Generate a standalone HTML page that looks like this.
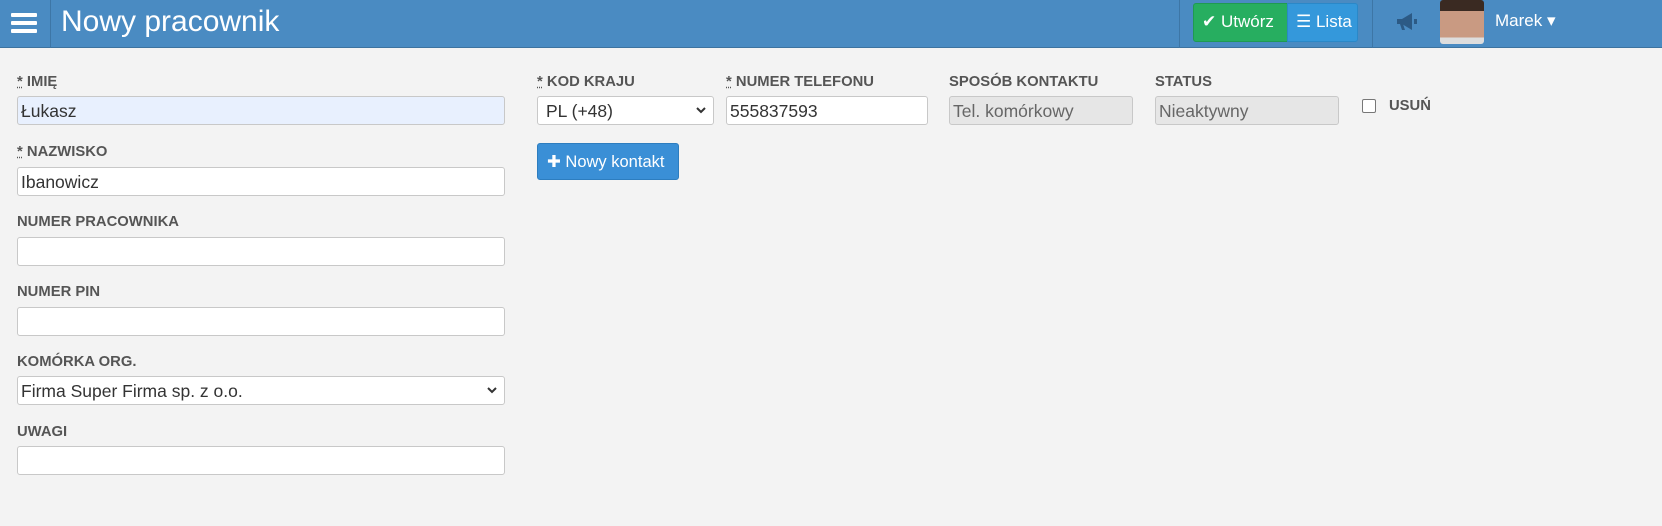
<!DOCTYPE html><html><head><meta charset="utf-8"><style>
*{box-sizing:border-box}body{margin:0;width:1662px;height:526px;background:#f3f3f3;font-family:"Liberation Sans","DejaVu Sans",sans-serif;position:relative;overflow:hidden}
.hd{position:absolute;left:0;top:0;width:1662px;height:48px;background:#4a8bc2;border-bottom:1px solid #3d739f}
.sep{position:absolute;top:0;width:1px;height:48px;background:#3d76a6}
.t{position:absolute;left:61px;top:5px;color:#fff;font-size:30px}
.lab{position:absolute;font-size:14.8px;font-weight:bold;color:#555}
.lab u{text-decoration:underline dotted}
.in{position:absolute;height:29px;border:1px solid #c8c8c8;border-radius:3px;background:#fff;font-size:17.5px;color:#333;padding:4px 0 0 3px}
.dis{background:#e6e6e6;color:#666}
.chev{position:absolute;right:6px;top:7px}
</style></head><body>
<div class="hd">
<div style="position:absolute;left:11px;top:13px;width:26px"><div style="height:4px;background:#fff;margin-bottom:4px;border-radius:1px"></div><div style="height:4px;background:#fff;margin-bottom:4px;border-radius:1px"></div><div style="height:4px;background:#fff;border-radius:1px"></div></div>
<div class="sep" style="left:50px"></div>
<div class="t">Nowy pracownik</div>
<div class="sep" style="left:1179px"></div>
<div style="position:absolute;left:1193px;top:3px;width:95px;height:39px;background:#27ae60;border:1px solid #1f9a52;border-radius:3px 0 0 3px;color:#fff;font-size:17px;padding:8px 0 0 8px">✔ Utwórz</div>
<div style="position:absolute;left:1287px;top:3px;width:71px;height:39px;background:#3498db;border:1px solid #2a88c8;border-radius:0 3px 3px 0;color:#fff;font-size:17px;padding:8px 0 0 8px">☰ Lista</div>
<div class="sep" style="left:1372px"></div>
<svg style="position:absolute;left:1396px;top:12px" width="22" height="20" viewBox="0 0 22 20"><path d="M1 7h5l10-6v17l-10-6H1z" fill="#2c5a85"/><path d="M4 12l2 6h3l-2-6z" fill="#2c5a85"/><rect x="18" y="7" width="3" height="5" fill="#2c5a85"/></svg>
<div style="position:absolute;left:1440px;top:0;width:44px;height:44px;border-radius:3px;background:linear-gradient(#3a2a22 0 25%,#c99a82 25% 85%,#ddd 85%)"></div>
<div style="position:absolute;left:1495px;top:11px;color:#fff;font-size:17px">Marek ▾</div>
</div>
<div class="lab" style="left:17px;top:74px"><u>*</u> IMIĘ</div>
<div class="in" style="left:17px;top:96px;width:488px;background:#e8f0fe">Łukasz</div>
<div class="lab" style="left:17px;top:144px"><u>*</u> NAZWISKO</div>
<div class="in" style="left:17px;top:167px;width:488px">Ibanowicz</div>
<div class="lab" style="left:17px;top:214px">NUMER PRACOWNIKA</div>
<div class="in" style="left:17px;top:237px;width:488px"></div>
<div class="lab" style="left:17px;top:284px">NUMER PIN</div>
<div class="in" style="left:17px;top:307px;width:488px"></div>
<div class="lab" style="left:17px;top:354px">KOMÓRKA ORG.</div>
<div class="in" style="left:17px;top:376px;width:488px">Firma Super Firma sp. z o.o.<svg class="chev" width="12" height="12" viewBox="0 0 12 12"><path d="M2 4l4 4 4-4" fill="none" stroke="#333" stroke-width="2"/></svg></div>
<div class="lab" style="left:17px;top:424px">UWAGI</div>
<div class="in" style="left:17px;top:446px;width:488px"></div>
<div class="lab" style="left:537px;top:74px"><u>*</u> KOD KRAJU</div>
<div class="in" style="left:537px;top:96px;width:177px;padding-left:8px">PL (+48)<svg class="chev" width="12" height="12" viewBox="0 0 12 12"><path d="M2 4l4 4 4-4" fill="none" stroke="#333" stroke-width="2"/></svg></div>
<div class="lab" style="left:726px;top:74px"><u>*</u> NUMER TELEFONU</div>
<div class="in" style="left:726px;top:96px;width:202px">555837593</div>
<div class="lab" style="left:949px;top:74px">SPOSÓB KONTAKTU</div>
<div class="in dis" style="left:949px;top:96px;width:184px">Tel. komórkowy</div>
<div class="lab" style="left:1155px;top:74px">STATUS</div>
<div class="in dis" style="left:1155px;top:96px;width:184px">Nieaktywny</div>
<div style="position:absolute;left:1362px;top:99px;width:14px;height:14px;border:1px solid #777;border-radius:2px;background:#fff"></div>
<div class="lab" style="left:1389px;top:98px">USUŃ</div>
<div style="position:absolute;left:537px;top:143px;width:142px;height:37px;background:#3a8fd6;border:1px solid #2d7dbf;border-radius:3px;color:#fff;font-size:16.5px;padding:8px 0 0 9px"><b>✚</b> Nowy kontakt</div>
</body></html>
